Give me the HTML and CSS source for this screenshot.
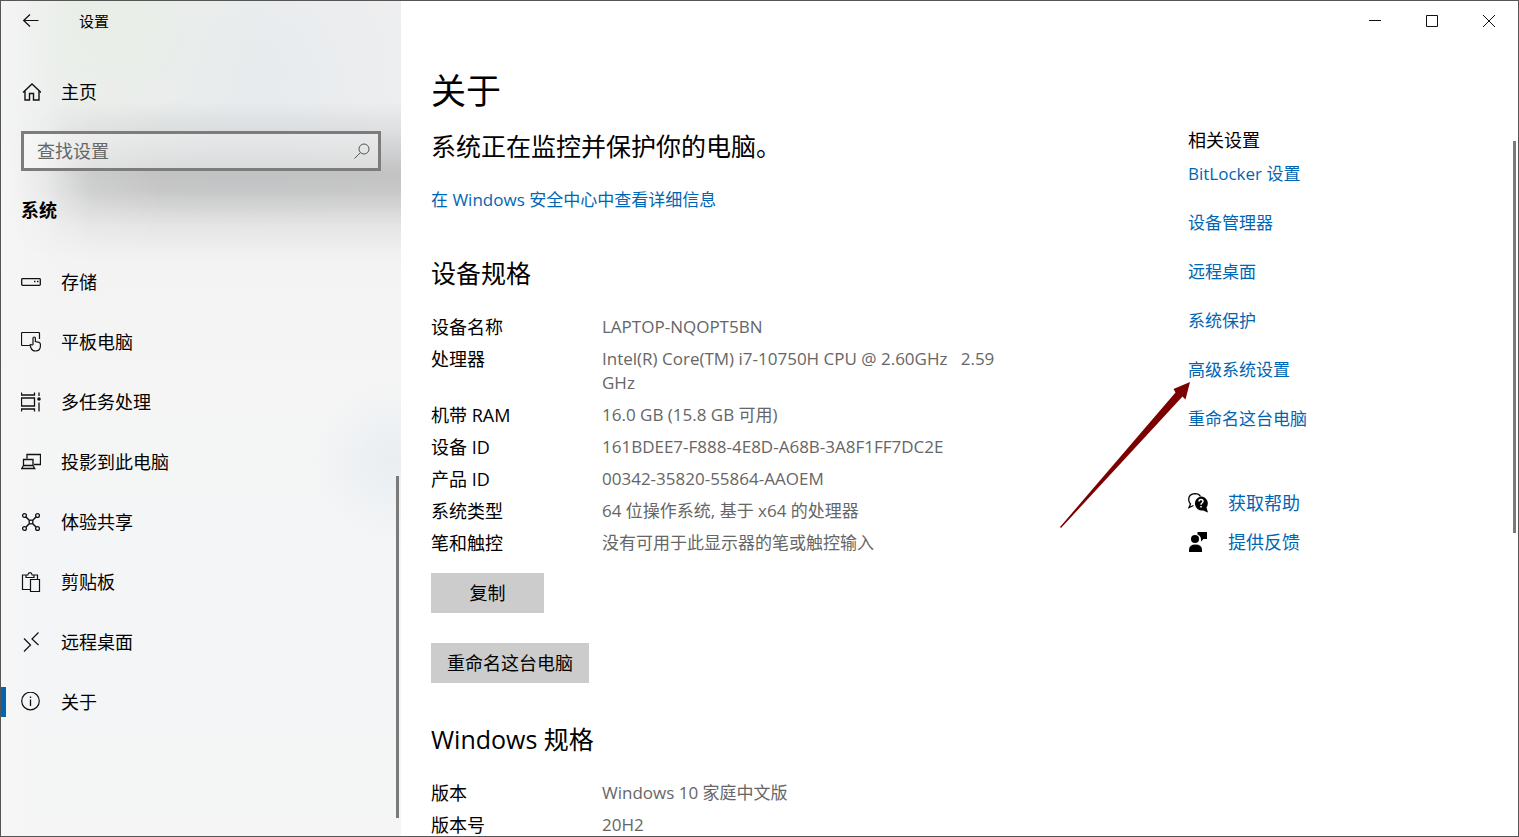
FILE: index.html
```html
<!DOCTYPE html>
<html lang="zh-CN">
<head>
    <meta charset="UTF-8">
    <meta name="viewport" content="width=device-width, initial-scale=1.0">
    <title>设置</title>
    <link rel="stylesheet" href="styles.css">
</head>
<body>
    <div class="window">
        <!-- Sidebar -->
        <aside class="sidebar">
            <header class="titlebar">
                <button class="back" aria-label="返回">
                    <svg width="16" height="14" viewBox="0 0 16 14"><path d="M7 .5.7 6.500 7 12.500M.7 6.500h14.800" stroke-width="1.200"/></svg>
                </button>
                <span class="app-name">设置</span>
            </header>

            <a class="nav-link home" href="#">
                <svg width="20" height="20" viewBox="0 0 20 20"><path d="M2 10.500 11 2l9 8.500M4 9v9h4.500v-6.500h4V18H18V9" stroke-width="1.400"/></svg>
                主页
            </a>

            <form class="search">
                <input type="text" id="search" placeholder="查找设置" aria-label="查找设置">
                <button type="button" aria-label="搜索">
                    <svg width="16" height="16" viewBox="0 0 16 16"><circle cx="10" cy="6" r="5"/><path d="M6.500 9.500.5 15.500"/></svg>
                </button>
            </form>

            <h2 class="group">系统</h2>

            <nav class="nav">
                <a class="nav-link" href="#">
                    <svg width="20" height="20" viewBox="0 0 20 20"><rect x=".7" y="6.700" width="18.600" height="6.600" rx=".8" stroke-width="1.300"/><path d="M13 9.500h1.500M16 9.500h1.500" stroke-width="1.300"/></svg>
                    存储
                </a>
                <a class="nav-link" href="#">
                    <svg width="20" height="20" viewBox="0 0 20 20"><path d="M8.500 13.500H1.500a1 1 0 0 1-1-1v-11a1 1 0 0 1 1-1h16a1 1 0 0 1 1 1V7M12 13V6.200a1.200 1.200 0 0 1 2.400 0V9.500l3.600.8q1.400.4 1.400 2V14q0 5-4.900 5-3.500 0-4.500-3l-1-3q.8-1.300 2.500.500" stroke-width="1.200"/></svg>
                    平板电脑
                </a>
                <a class="nav-link" href="#">
                    <svg width="20" height="20" viewBox="0 0 20 20"><path d="M.5.5V3h13V.5M.5 6h13v8H.5zM.5 19.500V17h13v2.500M18 .5V4M18 10.500v9" stroke-width="1.300"/><circle class="solid" cx="18" cy="7" r="1.800"/></svg>
                    多任务处理
                </a>
                <a class="nav-link" href="#">
                    <svg width="20" height="20" viewBox="0 0 20 20"><path d="M6 6.500V2.500h13.500v10H13M2.500 7.500H12v6H2.500zM2.500 13.500.7 16.500h13L12 13.500" stroke-width="1.300"/></svg>
                    投影到此电脑
                </a>
                <a class="nav-link" href="#">
                    <svg width="20" height="20" viewBox="0 0 20 20"><path d="M5 5l3 3M15 5l-3 3M5 15l3-3M15 15l-3-3" stroke-width="1.500"/><g stroke-width="1.300"><rect x="8.200" y="8.200" width="3.600" height="3.600"/><circle cx="3.500" cy="3.500" r="1.900"/><circle cx="16.500" cy="3.500" r="1.900"/><circle cx="3.500" cy="16.500" r="1.900"/><circle cx="16.500" cy="16.500" r="1.900"/></g></svg>
                    体验共享
                </a>
                <a class="nav-link" href="#">
                    <svg width="20" height="20" viewBox="0 0 20 20"><path d="M9.500 17.500H1.500V3H5M13 3h3.500v4M5 5.500V3h1.800q.4-2.300 2.200-2.300T11.200 3H13v2.500zM9.500 7.500h9V19.500h-9z" stroke-width="1.200"/></svg>
                    剪贴板
                </a>
                <a class="nav-link" href="#">
                    <svg width="20" height="20" viewBox="0 0 20 20"><path d="M3 6.500 9.500 13 3 19.500M17.500.5 11 7l6.500 6" stroke-width="1.200"/></svg>
                    远程桌面
                </a>
                <a class="nav-link active" href="#">
                    <svg width="20" height="20" viewBox="0 0 20 20"><circle cx="9.500" cy="9" r="8.800" stroke-width="1.200"/><path d="M9.500 7.500V14M9.500 4.500V6" stroke-width="1.300"/></svg>
                    关于
                </a>
            </nav>
            <div class="scrollbar nav-scroll"></div>
        </aside>

        <!-- Main area -->
        <main class="main">
            <div class="controls">
                <button aria-label="最小化"><svg width="12" height="12" viewBox="0 0 12 12"><path d="M0 5.500h12"/></svg></button>
                <button aria-label="最大化"><svg width="12" height="12" viewBox="0 0 12 12"><path d="M.5.5h11v11H.5z"/></svg></button>
                <button aria-label="关闭"><svg width="12" height="12" viewBox="0 0 12 12"><path d="M0 0l12 12M12 0 0 12"/></svg></button>
            </div>

            <h1>关于</h1>

            <div class="columns">
                <section class="content">
                    <h2 class="status">系统正在监控并保护你的电脑。</h2>
                    <a class="security" href="#">在 Windows 安全中心中查看详细信息</a>

                    <h2>设备规格</h2>
                    <table class="specs">
                        <tr><th scope="row">设备名称</th><td>LAPTOP-NQOPT5BN</td></tr>
                        <tr><th scope="row">处理器</th><td>Intel(R) Core(TM) i7-10750H CPU @ 2.60GHz&nbsp;&nbsp; 2.59 GHz</td></tr>
                        <tr><th scope="row">机带 RAM</th><td>16.0 GB (15.8 GB 可用)</td></tr>
                        <tr><th scope="row">设备 ID</th><td>161BDEE7-F888-4E8D-A68B-3A8F1FF7DC2E</td></tr>
                        <tr><th scope="row">产品 ID</th><td>00342-35820-55864-AAOEM</td></tr>
                        <tr><th scope="row">系统类型</th><td>64 位操作系统, 基于 x64 的处理器</td></tr>
                        <tr><th scope="row">笔和触控</th><td>没有可用于此显示器的笔或触控输入</td></tr>
                    </table>
                    <div class="actions">
                        <button class="btn">复制</button>
                        <button class="btn">重命名这台电脑</button>
                    </div>

                    <h2>Windows 规格</h2>
                    <table class="specs">
                        <tr><th scope="row">版本</th><td>Windows 10 家庭中文版</td></tr>
                        <tr><th scope="row">版本号</th><td>20H2</td></tr>
                    </table>
                </section>

                <aside class="related">
                    <h3>相关设置</h3>
                    <ul class="links">
                        <li><a href="#">BitLocker 设置</a></li>
                        <li><a href="#">设备管理器</a></li>
                        <li><a href="#">远程桌面</a></li>
                        <li><a href="#">系统保护</a></li>
                        <li class="marked">
                            <a href="#">高级系统设置</a>
                            <svg class="arrow" width="130" height="146" viewBox="0 0 130 146"><path d="M130 0 113.500 7l2 3.500L0 145l1 1L122.500 14.500l3 3z"/></svg>
                        </li>
                        <li><a href="#">重命名这台电脑</a></li>
                    </ul>
                    <div class="support">
                        <a href="#">
                            <svg width="20" height="20" viewBox="0 0 20 20"><path d="M5.500 12.500 1 14.500l1.500-3.500Q.7 9 .7 6.500.7 1 7 .7q4 0 5.500 2.800" fill="none" stroke="#000" stroke-width="1.300"/><path d="M13 3.500a7 7 0 0 1 5.500 11l1.500 5-5-2A7 7 0 1 1 13 3.500z"/><path d="M11 8.500q0-2 2-2t2 1.800q0 1-1 1.700t-1 1.700M13 13V14.500" fill="none" stroke="#fff" stroke-width="1.500"/></svg>
                            获取帮助
                        </a>
                        <a href="#">
                            <svg width="20" height="20" viewBox="0 0 20 20"><circle cx="7" cy="7" r="4"/><path d="M1 20v-2q0-5.500 6.500-5.500T14 18v2zM9.500 0H19v7h-3.500L13 9.500V7q-.3-3.500-3.500-4.500z"/></svg>
                            提供反馈
                        </a>
                    </div>
                </aside>
            </div>
            <div class="scrollbar page-scroll"></div>
        </main>
    </div>
</body>
</html>
```
FILE: styles.css
```css
/* General */
* {
    box-sizing: border-box;
}

body {
    margin: 0;
    font-family: "Open Sans", "Noto Sans CJK SC", sans-serif;
    font-size: 18px;
    line-height: 24px;
    color: #000;
    background: #fff;
}

h1, h2, h3 {
    margin: 0;
    font-weight: 400;
}

a {
    color: #0066b4;
    text-decoration: none;
}

button, input {
    font: inherit;
    color: inherit;
    border: none;
    background: none;
    padding: 0;
}

svg {
    display: block;
    flex-shrink: 0;
}

.window {
    display: flex;
    height: 100vh;
    overflow: hidden;
    border: 1px solid #555;
}

/* Sidebar */
.sidebar {
    position: relative;
    width: 400px;
    flex-shrink: 0;
    background:
        linear-gradient(90deg, rgba(246, 246, 246, 0.8), transparent 60px),
        radial-gradient(circle at 110px 20px, rgba(232, 238, 229, 0.8), transparent 150px),
        radial-gradient(circle at 250px 70px, rgba(229, 234, 237, 0.8), transparent 160px),
        radial-gradient(circle at 390px 460px, rgba(232, 237, 241, 0.9), transparent 80px),
        linear-gradient(#eeeeef, #edeeef 120px, #f3f3f3 250px, #f5f5f5 400px, #f3f5f7 600px, #f5f5f5);
}

/* soft dark band behind the search box */
.sidebar::before {
    content: "";
    position: absolute;
    top: 100px;
    left: 0;
    width: 100%;
    height: 160px;
    background: linear-gradient(transparent, rgba(0, 0, 0, 0.05) 25px, rgba(0, 0, 0, 0.19) 72px, rgba(0, 0, 0, 0.17) 90px, rgba(0, 0, 0, 0.05) 125px, transparent);
    mask-image: linear-gradient(90deg, transparent 10px, rgba(0, 0, 0, 0.2) 45px, rgba(0, 0, 0, 0.8) 90px, #000 160px);
}

.sidebar > * {
    position: relative;
}

.sidebar svg,
.controls svg {
    fill: none;
    stroke: #111;
}

.sidebar .solid {
    fill: #111;
    stroke: none;
}

.titlebar {
    display: flex;
    align-items: center;
    height: 40px;
    padding-left: 22px;
    font-size: 15px;
}

.app-name {
    margin-left: 40px;
}

.nav-link {
    display: flex;
    align-items: center;
    gap: 20px;
    height: 60px;
    padding-left: 20px;
    color: #000;
}

.home {
    height: 40px;
    margin-top: 31px;
}

.search {
    display: flex;
    align-items: center;
    height: 40px;
    margin: 19px 20px 0;
    padding: 0 8px 0 13px;
    border: 3px solid #7c7c7c;
    background: rgba(255, 255, 255, 0.4);
}

.search input {
    flex: 1;
    min-width: 0;
    outline: none;
}

.search input::placeholder {
    color: #666;
    opacity: 1;
}

.search .icon,
.search svg {
    stroke: #555;
}

.group {
    margin: 27px 20px 30px;
    font-size: 18px;
    font-weight: 700;
}

.active::before {
    content: "";
    width: 5px;
    height: 30px;
    margin-left: -20px;
    margin-right: -5px;
    background: #0066b4;
}

.scrollbar {
    width: 3px;
    background: #7a7a7a;
}

.sidebar .nav-scroll {
    position: absolute;
    right: 2px;
    bottom: 18px;
    height: 41%;
}

/* Main area */
.main {
    position: relative;
    flex: 1;
    min-width: 0;
    padding-left: 30px;
}

.controls {
    display: flex;
    justify-content: flex-end;
    height: 40px;
    padding-right: 1px;
}

.controls button {
    display: flex;
    align-items: center;
    justify-content: center;
    width: 57px;
}

h1 {
    margin-top: 28px;
    font-size: 35px;
    line-height: 44px;
}

.columns {
    display: flex;
    padding-top: 15px;
}

.content {
    flex: 1;
}

.content h2 {
    font-size: 25px;
    line-height: 36px;
}

.security {
    display: block;
    margin: 24px 0 43px;
    font-size: 17px;
}

.specs {
    margin-top: 20px;
    border-spacing: 0;
}

.specs th,
.specs td {
    padding: 4px 0;
    text-align: left;
    vertical-align: top;
    font-weight: 400;
}

.specs th {
    width: 171px;
}

.specs td {
    max-width: 400px;
    font-size: 17px;
    color: #666;
}

.actions {
    display: flex;
    flex-direction: column;
    align-items: flex-start;
    gap: 30px;
    margin: 14px 0 38px;
}

.btn {
    min-width: 113px;
    height: 40px;
    padding: 0 16px;
    background: #ccc;
}

/* Related settings */
.related {
    width: 330px;
}

.related h3 {
    font-size: 18px;
}

.links {
    display: grid;
    gap: 25px;
    margin: 10px 0 0;
    padding: 0;
    list-style: none;
    font-size: 17px;
}

.marked {
    position: relative;
}

.arrow {
    position: absolute;
    right: 100%;
    top: 24px;
    margin-right: -2px;
    fill: #7b0000;
}

.support {
    display: grid;
    gap: 15px;
    margin-top: 60px;
}

.support a {
    display: flex;
    align-items: center;
    gap: 20px;
}

.page-scroll {
    position: absolute;
    right: 2px;
    top: 140px;
    height: 47%;
}
```
